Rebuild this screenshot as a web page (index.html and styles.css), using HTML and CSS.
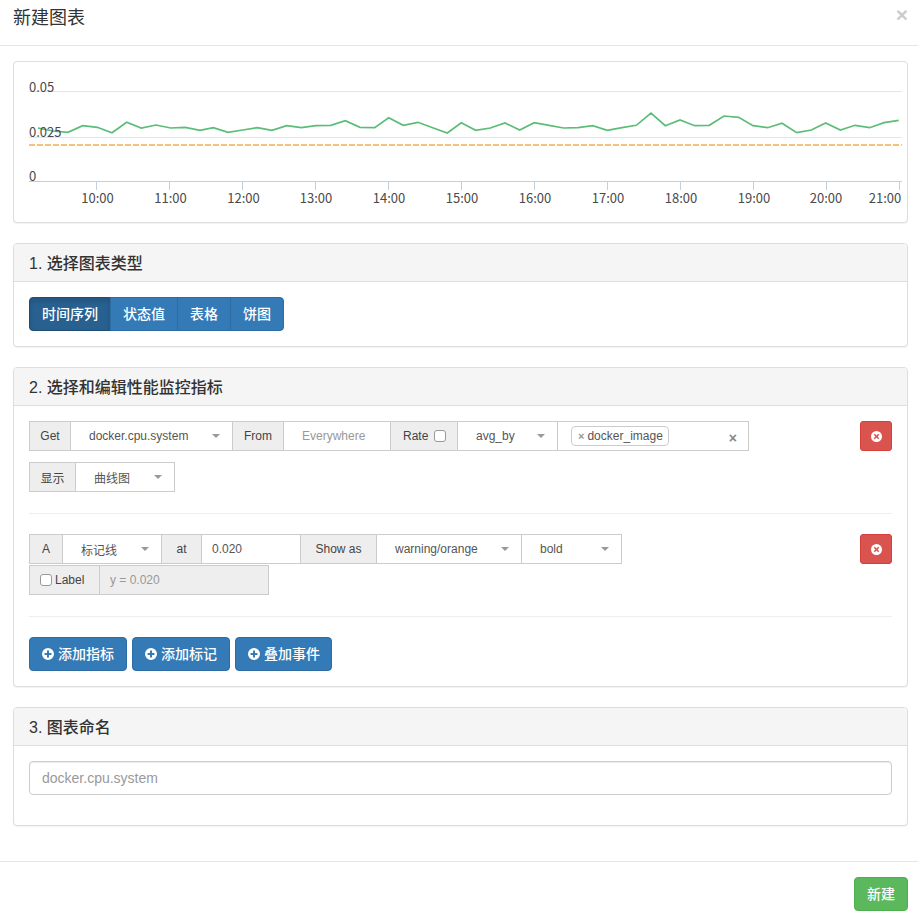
FILE: index.html
```html
<!DOCTYPE html>
<html lang="zh-CN">
<head>
    <meta charset="UTF-8">
    <meta name="viewport" content="width=device-width, initial-scale=1.0">
    <title>新建图表</title>
    <link rel="stylesheet" href="styles.css">
</head>
<body>
    <svg class="defs" width="0" height="0">
        <symbol id="icon-plus" viewBox="0 0 12 12">
            <path fill-rule="evenodd" d="M6 0a6 6 0 1 1 0 12A6 6 0 0 1 6 0zM5 2.6v2.4H2.6v2H5v2.4h2V7h2.4V5H7V2.6z"/>
        </symbol>
        <symbol id="icon-remove" viewBox="0 0 12 12">
            <path fill-rule="evenodd" d="M6 0a6 6 0 1 1 0 12A6 6 0 0 1 6 0zM4.2 3L3 4.2 4.8 6 3 7.8 4.2 9 6 7.2 7.8 9 9 7.8 7.2 6 9 4.2 7.8 3 6 4.8z"/>
        </symbol>
    </svg>

    <!--HEADER-->
    <header class="modal-header">
        <h4 class="modal-title">新建图表</h4>
        <span class="close">×</span>
    </header>

    <main class="modal-body">

        <!--CHART-->
        <section class="panel">
            <svg class="chart" width="893" height="160" viewBox="14 62 893 160">
                <line class="grid" x1="29" y1="91.5" x2="902" y2="91.5"/>
                <line class="grid" x1="29" y1="137.5" x2="902" y2="137.5"/>
                <line class="axis" x1="29" y1="181.5" x2="902" y2="181.5"/>
                <path class="axis" d="M96.5 181v9M169.5 181v9M242.5 181v9M315.5 181v9M388.5 181v9M461.5 181v9M534.5 181v9M607.5 181v9M680.5 181v9M753.5 181v9M826.5 181v9M899.5 181v9"/>
                <polyline class="series" points="38,128 53,131 68,132.3 82.7,125.7 97.3,127.3 112,132.7 126.7,122.3 141.3,128 156,125 170.7,128 185.3,127.3 200,130.3 213.3,127.7 228,132.3 242.7,130 257.3,127.7 272,130.3 286.7,125.7 301.3,127.7 316,125.7 330.7,125.3 345.3,120.7 360,127.3 374.7,127.7 388.7,117.7 403.3,125.3 418,122.3 432.7,127.7 447.3,133 461.3,122.7 475.7,130.3 490.3,128 505,123 519.7,130 534.3,122.7 549,125.3 563.7,128 578,127.7 592.7,125.7 607.3,130.3 622,127.7 636.3,125.3 651,113 665.3,125.7 680,120 694.7,125.7 709.3,125.3 724,116 738.7,117.3 753,125.7 767.7,127.7 782,123.3 796.7,132.7 811.3,130 825.7,123 840.3,130 855,125.3 869.7,127.7 884,122.7 898.7,120.3"/>
                <line class="marker" x1="29" y1="145" x2="902" y2="145"/>
                <text x="29" y="92">0.05</text>
                <text x="29" y="137">0.025</text>
                <text x="29" y="181">0</text>
                <g class="x-labels">
                    <text x="97.5" y="203">10:00</text>
                    <text x="170.5" y="203">11:00</text>
                    <text x="243.5" y="203">12:00</text>
                    <text x="316" y="203">13:00</text>
                    <text x="389" y="203">14:00</text>
                    <text x="462" y="203">15:00</text>
                    <text x="535" y="203">16:00</text>
                    <text x="608" y="203">17:00</text>
                    <text x="681" y="203">18:00</text>
                    <text x="754" y="203">19:00</text>
                    <text x="826" y="203">20:00</text>
                    <text x="885" y="203">21:00</text>
                </g>
            </svg>
        </section>

        <!--STEP 1-->
        <section class="panel">
            <h3 class="panel-heading">1. 选择图表类型</h3>
            <div class="panel-body">
                <div class="btn-group">
                    <button class="btn btn-blue active">时间序列</button>
                    <button class="btn btn-blue">状态值</button>
                    <button class="btn btn-blue">表格</button>
                    <button class="btn btn-blue">饼图</button>
                </div>
            </div>
        </section>

        <!--STEP 2-->
        <section class="panel">
            <h3 class="panel-heading">2. 选择和编辑性能监控指标</h3>
            <div class="panel-body">

                <div class="metric">
                    <div class="metric-rows">
                        <div class="input-row gap-big">
                            <span class="addon w42">Get</span>
                            <span class="select w162">docker.cpu.system<i class="caret"></i></span>
                            <span class="addon w51">From</span>
                            <input class="field w107" type="text" placeholder="Everywhere">
                            <label class="addon addon-check w67">Rate <input class="check check-right" type="checkbox"></label>
                            <span class="select w100">avg_by<i class="caret"></i></span>
                            <span class="tags w191">
                                <span class="tag"><b>×</b>docker_image</span>
                                <b class="clear">×</b>
                            </span>
                        </div>
                        <div class="input-row">
                            <span class="addon w47">显示</span>
                            <span class="select w99">曲线图<i class="caret"></i></span>
                        </div>
                    </div>
                    <button class="btn-remove"><svg width="11" height="11"><use href="#icon-remove"/></svg></button>
                </div>

                <hr class="divider">

                <div class="metric">
                    <div class="metric-rows">
                        <div class="input-row gap-small">
                            <span class="addon w34">A</span>
                            <span class="select w99">标记线<i class="caret"></i></span>
                            <span class="addon w40">at</span>
                            <input class="field field-value w99" type="text" value="0.020">
                            <span class="addon w76">Show as</span>
                            <span class="select w145">warning/orange<i class="caret"></i></span>
                            <span class="select w100">bold<i class="caret"></i></span>
                        </div>
                        <div class="input-row">
                            <label class="addon addon-check w71"><input class="check check-left" type="checkbox">Label</label>
                            <input class="field field-off w169" type="text" placeholder="y = 0.020" disabled>
                        </div>
                    </div>
                    <button class="btn-remove"><svg width="11" height="11"><use href="#icon-remove"/></svg></button>
                </div>

                <hr class="divider">

                <div class="add-buttons">
                    <button class="btn btn-blue"><svg width="12" height="12"><use href="#icon-plus"/></svg>添加指标</button>
                    <button class="btn btn-blue"><svg width="12" height="12"><use href="#icon-plus"/></svg>添加标记</button>
                    <button class="btn btn-blue"><svg width="12" height="12"><use href="#icon-plus"/></svg>叠加事件</button>
                </div>
            </div>
        </section>

        <!--STEP 3-->
        <section class="panel">
            <h3 class="panel-heading">3. 图表命名</h3>
            <div class="panel-body name-body">
                <input class="name-input" type="text" placeholder="docker.cpu.system">
            </div>
        </section>
    </main>

    <!--FOOTER-->
    <footer class="modal-footer">
        <button class="btn btn-green">新建</button>
    </footer>
</body>
</html>
```

FILE: styles.css
```css
* {
    box-sizing: border-box;
}

html, body {
    height: 916px;
    overflow: hidden;
}

body {
    margin: 0;
    background: #fff;
    color: #333;
    font-family: "Liberation Sans", "Noto Sans CJK SC", sans-serif;
    font-size: 14px;
}

.defs {
    position: absolute;
}

/* header */
.modal-header {
    display: flex;
    justify-content: space-between;
    height: 46px;
    padding: 5px 10px 0 13px;
    border-bottom: 1px solid #e5e5e5;
}

.modal-title {
    margin: 0;
    font-size: 18px;
    font-weight: 400;
    line-height: 26px;
}

.close {
    color: #ccc;
    font-size: 21px;
    font-weight: 700;
    line-height: 20px;
}

.modal-body {
    padding: 15px 10px 15px 13px;
}

/* panels */
.panel {
    margin-bottom: 20px;
    background: #fff;
    border: 1px solid #ddd;
    border-radius: 4px;
    box-shadow: 0 1px 1px rgba(0, 0, 0, .05);
    overflow: hidden;
}

.panel-heading {
    margin: 0;
    height: 38px;
    padding: 2px 15px 0;
    background: #f5f5f5;
    border-bottom: 1px solid #ddd;
    font-size: 16px;
    font-weight: 500;
    line-height: 36px;
}

.panel-body {
    padding: 15px;
}

.name-body {
    padding-bottom: 30px;
}

/* chart */
.chart {
    display: block;
    font-family: "Noto Sans CJK JP", sans-serif;
    font-size: 13px;
}

.chart text {
    fill: #4a4a4a;
}

.x-labels text {
    text-anchor: middle;
}

.grid {
    stroke: #e6e6e6;
}

.axis {
    stroke: #c0d0e0;
    fill: none;
}

.series {
    fill: none;
    stroke: #5cbd78;
    stroke-width: 1.7;
}

.marker {
    stroke: #f5c27a;
    stroke-width: 2;
    stroke-dasharray: 6 2;
}

/* buttons */
.btn {
    height: 34px;
    padding: 0 12px 2px;
    border: 1px solid transparent;
    border-radius: 4px;
    color: #fff;
    font-family: inherit;
    font-size: 14px;
    font-weight: 500;
}

.btn svg {
    margin-right: 4px;
    fill: #fff;
    vertical-align: -1px;
}

.btn-blue {
    background: #337ab7;
    border-color: #2e6da4;
}

.btn-green {
    background: #5cb85c;
    border-color: #4cae4c;
}

.btn-group {
    display: flex;
}

.btn-group .btn {
    border-radius: 0;
    margin-left: -1px;
}

.btn-group .btn:first-child {
    margin-left: 0;
    border-radius: 4px 0 0 4px;
}

.btn-group .btn:last-child {
    border-radius: 0 4px 4px 0;
}

.btn-blue.active {
    background: #286090;
    border-color: #204d74;
    box-shadow: inset 0 3px 5px rgba(0, 0, 0, .125);
}

.add-buttons {
    display: flex;
    gap: 5px;
}

.add-buttons .btn:last-child {
    padding-right: 11px;
}

.btn-remove {
    display: flex;
    align-items: center;
    justify-content: center;
    width: 32px;
    height: 30px;
    padding: 0;
    background: #d9534f;
    border: 1px solid #d43f3a;
    border-radius: 3px;
}

.btn-remove svg {
    fill: #fff;
}

/* metric rows */
.metric {
    display: flex;
    justify-content: space-between;
}

.input-row {
    display: flex;
    height: 30px;
    font-size: 12px;
    color: #555;
}

.gap-big {
    margin-bottom: 11px;
}

.gap-small {
    margin-bottom: 1px;
}

.input-row > * {
    display: flex;
    align-items: center;
    height: 30px;
    border: 1px solid #ccc;
    border-left: 0;
}

.input-row > :first-child {
    border-left: 1px solid #ccc;
}

.addon {
    justify-content: center;
    background: #eee;
    color: #444;
}

.addon-check {
    justify-content: flex-start;
    padding-left: 12px;
}

.input-row > .addon-check:first-child {
    padding-left: 10px;
}

.select {
    justify-content: space-between;
    padding: 0 12px 0 18px;
    background: #fff;
}

.caret {
    border-top: 4px solid #999;
    border-left: 4px solid transparent;
    border-right: 4px solid transparent;
}

.field {
    padding: 0 10px 0 18px;
    background: #fff;
    color: #555;
    font-family: inherit;
    font-size: 12px;
    outline: 0;
    border-radius: 0;
}

.field::placeholder, .name-input::placeholder {
    color: #999;
    opacity: 1;
}

.field-value {
    padding-left: 10px;
}

.field-off {
    padding-left: 10px;
    background: #eee;
}

.check {
    appearance: none;
    width: 12px;
    height: 12px;
    margin: 0;
    background: #fff;
    border: 1px solid #999;
    border-radius: 3px;
}

.check-right {
    margin-left: 6px;
}

.check-left {
    margin-right: 3px;
}

.tags {
    justify-content: space-between;
    padding: 0 11px 0 13px;
    background: #fff;
}

.tag {
    display: flex;
    align-items: center;
    height: 20px;
    padding: 0 5px 0 6px;
    border: 1px solid #ccc;
    border-radius: 4px;
}

.tag b {
    margin-right: 3px;
    color: #999;
    font-size: 11px;
}

.clear {
    margin-top: 4px;
    color: #888;
    font-size: 14px;
}

.w34 { width: 34px; }
.w40 { width: 40px; }
.w42 { width: 42px; }
.w47 { width: 47px; }
.w51 { width: 51px; }
.w67 { width: 67px; }
.w71 { width: 71px; }
.w76 { width: 76px; }
.w99 { width: 99px; }
.w100 { width: 100px; }
.w107 { width: 107px; }
.w145 { width: 145px; }
.w162 { width: 162px; }
.w169 { width: 169px; }
.w191 { width: 191px; }

.divider {
    margin: 21px 0 20px;
    border: 0;
    border-top: 1px solid #eee;
}

.name-input {
    display: block;
    width: 100%;
    height: 34px;
    padding: 0 12px;
    border: 1px solid #ccc;
    border-radius: 4px;
    box-shadow: inset 0 1px 1px rgba(0, 0, 0, .075);
    font-family: inherit;
    font-size: 14px;
    color: #555;
}

/* footer */
.modal-footer {
    display: flex;
    justify-content: flex-end;
    padding: 15px 10px 5px 15px;
    border-top: 1px solid #e5e5e5;
}
```
